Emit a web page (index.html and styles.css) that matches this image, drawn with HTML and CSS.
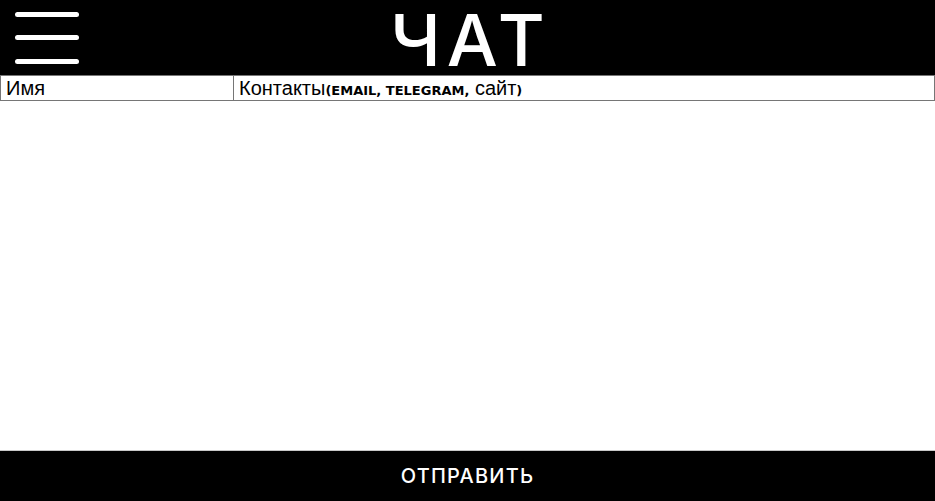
FILE: index.html
```html
<!DOCTYPE html>
<html lang="ru">
<head>
<meta charset="utf-8">
<title>Чат</title>
<link rel="stylesheet" href="styles.css">
</head>
<body>
<div class="page">
  <header class="header">
    <button class="burger" aria-label="Меню">
      <span class="burger-line"></span>
      <span class="burger-line"></span>
      <span class="burger-line"></span>
    </button>
    <h1 class="title">ЧАТ</h1>
    <div class="spacer"></div>
  </header>
  <div class="fields">
    <div class="field field-name">Имя</div>
    <div class="field field-contacts">Контакты<span class="latin">(EMAIL, TELEGRAM,</span> сайт<span class="latin">)</span></div>
  </div>
  <div class="message"></div>
  <button class="send">ОТПРАВИТЬ</button>
</div>
</body>
</html>
```
FILE: styles.css
```css
html, body {
  margin: 0;
  padding: 0;
  height: 100%;
  background: #fff;
}
.page {
  display: flex;
  flex-direction: column;
  height: 501px;
  width: 935px;
}
.header {
  height: 75px;
  background: #000;
  display: grid;
  grid-template-columns: 1fr auto 1fr;
  align-items: center;
  flex: none;
}
.burger {
  margin: 0 0 0 15px;
  padding: 0;
  border: 0;
  background: transparent;
  width: 64px;
  height: 52px;
  display: flex;
  flex-direction: column;
  justify-content: space-between;
}
.burger-line {
  display: block;
  height: 5px;
  width: 64px;
  border-radius: 3px;
  background: #fff;
}
.title {
  margin: 4px 0 0 6px;
  line-height: 71px;
  color: #fff;
  font-family: Inter, "DejaVu Sans", sans-serif;
  font-weight: 500;
  font-size: 72px;
  letter-spacing: 6px;
}
.fields {
  display: flex;
  height: 26px;
  flex: none;
}
.field {
  box-sizing: border-box;
  height: 26px;
  border: 1px solid #767676;
  font-family: "Liberation Sans", Arial, sans-serif;
  font-size: 20px;
  line-height: 24px;
  color: #000;
  padding-left: 5px;
  white-space: nowrap;
  overflow: hidden;
}
.field-name {
  width: 234px;
}
.field-contacts {
  flex: 1;
  margin-left: -1px;
}
.latin {
  font-family: "DejaVu Sans", sans-serif;
  font-weight: bold;
  font-size: 13px;
}
.message {
  flex: 1;
  border-bottom: 1px solid #c8c8c8;
}
.send {
  flex: none;
  height: 50px;
  width: 100%;
  margin: 0;
  border: 0;
  background: #000;
  color: #fff;
  font-family: Inter, "DejaVu Sans", sans-serif;
  font-size: 20px;
  font-weight: 500;
  letter-spacing: 1.2px;
  padding: 0;
}
```
